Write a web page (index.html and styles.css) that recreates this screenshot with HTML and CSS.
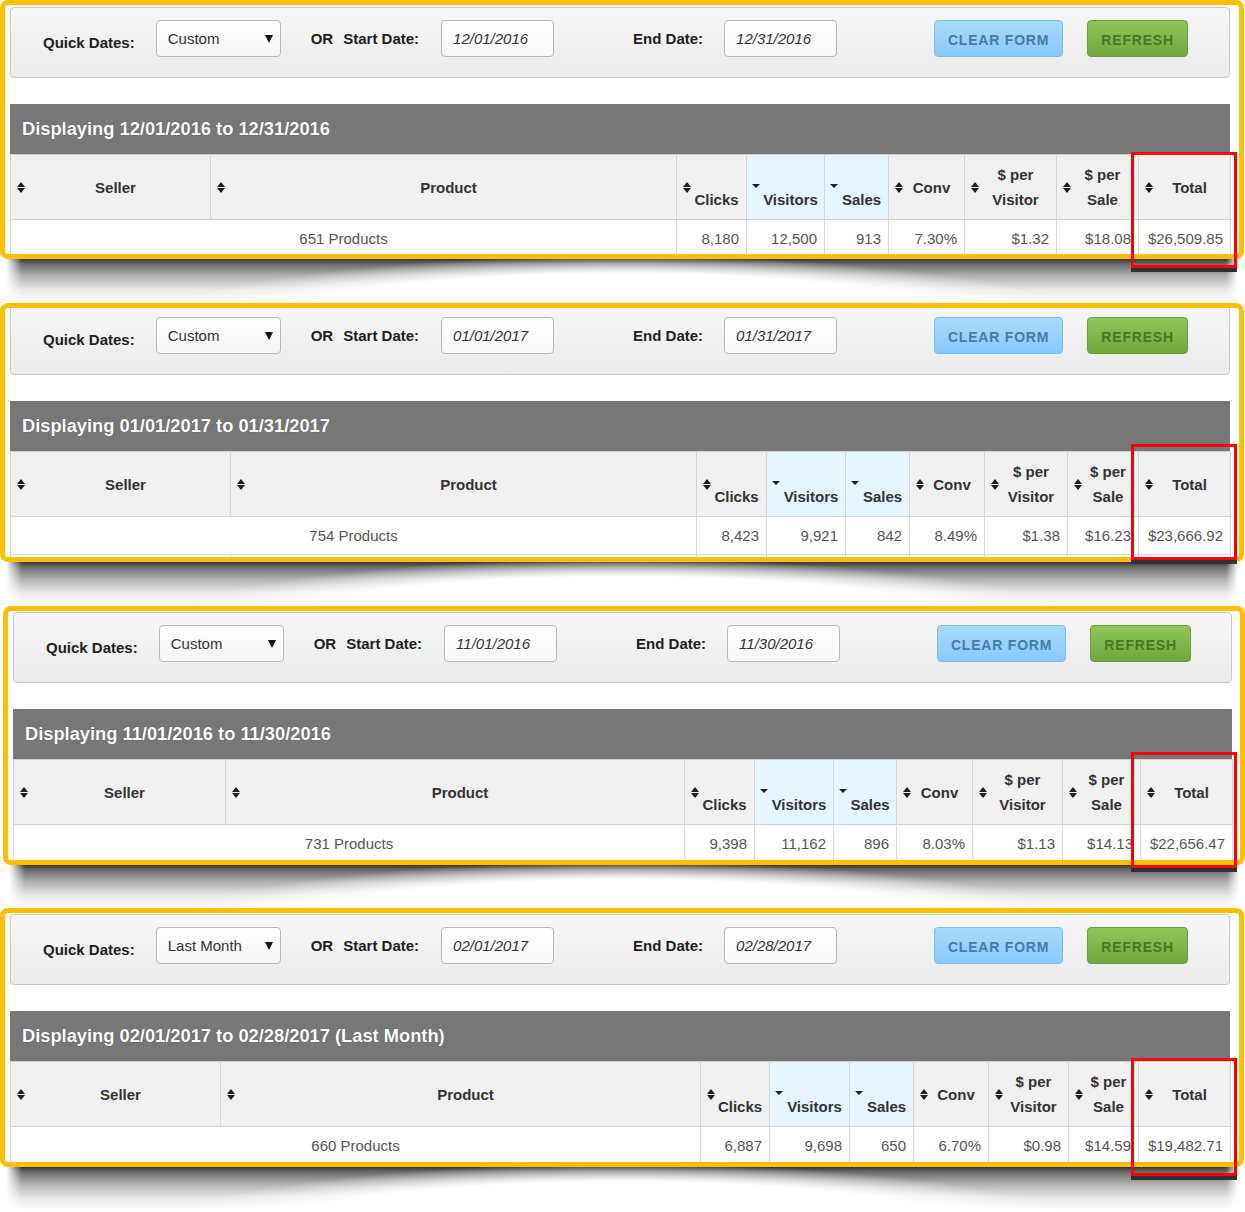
FILE: index.html
```html
<!DOCTYPE html>
<html lang="en">
<head>
<meta charset="utf-8">
<title>Date range reports</title>
<link rel="stylesheet" href="styles.css">
</head>
<body>
<div class="page">

  <section class="panel panel-1">
    <div class="frame">
      <form class="filters">
        <span class="lbl lbl-quick">Quick Dates:</span>
        <div class="select"><span>Custom</span><i class="caret"></i></div>
        <span class="lbl lbl-or"><span class="or">OR</span>Start Date:</span>
        <div class="date">12/01/2016</div>
        <span class="lbl lbl-end">End Date:</span>
        <div class="date">12/31/2016</div>
        <button type="button" class="btn btn-clear">CLEAR FORM</button>
        <button type="button" class="btn btn-refresh">REFRESH</button>
      </form>
      <h2 class="range">Displaying 12/01/2016 to 12/31/2016</h2>
      <table class="stats">
        <colgroup><col><col><col><col><col><col><col><col><col></colgroup>
        <thead>
          <tr>
            <th><i class="sort"></i>Seller</th>
            <th><i class="sort"></i>Product</th>
            <th class="low"><i class="sort"></i><span>Clicks</span></th>
            <th class="low active"><i class="sort-desc"></i><span>Visitors</span></th>
            <th class="low active"><i class="sort-desc"></i><span>Sales</span></th>
            <th><i class="sort"></i>Conv</th>
            <th><i class="sort"></i>$ per<br>Visitor</th>
            <th><i class="sort"></i>$ per<br>Sale</th>
            <th><i class="sort"></i>Total</th>
          </tr>
        </thead>
        <tbody>
          <tr>
            <td class="count" colspan="2">651 Products</td>
            <td>8,180</td><td>12,500</td><td>913</td><td>7.30%</td><td>$1.32</td><td>$18.08</td><td>$26,509.85</td>
          </tr>
          <tr class="blank"><td></td><td></td><td></td><td></td><td></td><td></td><td></td><td></td><td></td></tr>
        </tbody>
      </table>
    </div>
    <div class="highlight"></div>
  </section>

  <section class="panel panel-2">
    <div class="frame">
      <form class="filters">
        <span class="lbl lbl-quick">Quick Dates:</span>
        <div class="select"><span>Custom</span><i class="caret"></i></div>
        <span class="lbl lbl-or"><span class="or">OR</span>Start Date:</span>
        <div class="date">01/01/2017</div>
        <span class="lbl lbl-end">End Date:</span>
        <div class="date">01/31/2017</div>
        <button type="button" class="btn btn-clear">CLEAR FORM</button>
        <button type="button" class="btn btn-refresh">REFRESH</button>
      </form>
      <h2 class="range">Displaying 01/01/2017 to 01/31/2017</h2>
      <table class="stats">
        <colgroup><col><col><col><col><col><col><col><col><col></colgroup>
        <thead>
          <tr>
            <th><i class="sort"></i>Seller</th>
            <th><i class="sort"></i>Product</th>
            <th class="low"><i class="sort"></i><span>Clicks</span></th>
            <th class="low active"><i class="sort-desc"></i><span>Visitors</span></th>
            <th class="low active"><i class="sort-desc"></i><span>Sales</span></th>
            <th><i class="sort"></i>Conv</th>
            <th><i class="sort"></i>$ per<br>Visitor</th>
            <th><i class="sort"></i>$ per<br>Sale</th>
            <th><i class="sort"></i>Total</th>
          </tr>
        </thead>
        <tbody>
          <tr>
            <td class="count" colspan="2">754 Products</td>
            <td>8,423</td><td>9,921</td><td>842</td><td>8.49%</td><td>$1.38</td><td>$16.23</td><td>$23,666.92</td>
          </tr>
          <tr class="blank"><td></td><td></td><td></td><td></td><td></td><td></td><td></td><td></td><td></td></tr>
        </tbody>
      </table>
    </div>
    <div class="highlight"></div>
  </section>

  <section class="panel panel-3">
    <div class="frame">
      <form class="filters">
        <span class="lbl lbl-quick">Quick Dates:</span>
        <div class="select"><span>Custom</span><i class="caret"></i></div>
        <span class="lbl lbl-or"><span class="or">OR</span>Start Date:</span>
        <div class="date">11/01/2016</div>
        <span class="lbl lbl-end">End Date:</span>
        <div class="date">11/30/2016</div>
        <button type="button" class="btn btn-clear">CLEAR FORM</button>
        <button type="button" class="btn btn-refresh">REFRESH</button>
      </form>
      <h2 class="range">Displaying 11/01/2016 to 11/30/2016</h2>
      <table class="stats">
        <colgroup><col><col><col><col><col><col><col><col><col></colgroup>
        <thead>
          <tr>
            <th><i class="sort"></i>Seller</th>
            <th><i class="sort"></i>Product</th>
            <th class="low"><i class="sort"></i><span>Clicks</span></th>
            <th class="low active"><i class="sort-desc"></i><span>Visitors</span></th>
            <th class="low active"><i class="sort-desc"></i><span>Sales</span></th>
            <th><i class="sort"></i>Conv</th>
            <th><i class="sort"></i>$ per<br>Visitor</th>
            <th><i class="sort"></i>$ per<br>Sale</th>
            <th><i class="sort"></i>Total</th>
          </tr>
        </thead>
        <tbody>
          <tr>
            <td class="count" colspan="2">731 Products</td>
            <td>9,398</td><td>11,162</td><td>896</td><td>8.03%</td><td>$1.13</td><td>$14.13</td><td>$22,656.47</td>
          </tr>
          <tr class="blank"><td></td><td></td><td></td><td></td><td></td><td></td><td></td><td></td><td></td></tr>
        </tbody>
      </table>
    </div>
    <div class="highlight"></div>
  </section>

  <section class="panel panel-4">
    <div class="frame">
      <form class="filters">
        <span class="lbl lbl-quick">Quick Dates:</span>
        <div class="select"><span>Last Month</span><i class="caret"></i></div>
        <span class="lbl lbl-or"><span class="or">OR</span>Start Date:</span>
        <div class="date">02/01/2017</div>
        <span class="lbl lbl-end">End Date:</span>
        <div class="date">02/28/2017</div>
        <button type="button" class="btn btn-clear">CLEAR FORM</button>
        <button type="button" class="btn btn-refresh">REFRESH</button>
      </form>
      <h2 class="range">Displaying 02/01/2017 to 02/28/2017 (Last Month)</h2>
      <table class="stats">
        <colgroup><col><col><col><col><col><col><col><col><col></colgroup>
        <thead>
          <tr>
            <th><i class="sort"></i>Seller</th>
            <th><i class="sort"></i>Product</th>
            <th class="low"><i class="sort"></i><span>Clicks</span></th>
            <th class="low active"><i class="sort-desc"></i><span>Visitors</span></th>
            <th class="low active"><i class="sort-desc"></i><span>Sales</span></th>
            <th><i class="sort"></i>Conv</th>
            <th><i class="sort"></i>$ per<br>Visitor</th>
            <th><i class="sort"></i>$ per<br>Sale</th>
            <th><i class="sort"></i>Total</th>
          </tr>
        </thead>
        <tbody>
          <tr>
            <td class="count" colspan="2">660 Products</td>
            <td>6,887</td><td>9,698</td><td>650</td><td>6.70%</td><td>$0.98</td><td>$14.59</td><td>$19,482.71</td>
          </tr>
          <tr class="blank"><td></td><td></td><td></td><td></td><td></td><td></td><td></td><td></td><td></td></tr>
        </tbody>
      </table>
    </div>
    <div class="highlight"></div>
  </section>

</div>
</body>
</html>
```

FILE: styles.css
```css
html, body {
  margin: 0;
  background: #fff;
}

body {
  font-family: "Liberation Sans", Arial, sans-serif;
  color: #333;
}

.page {
  width: 1245px;
  padding-bottom: 45px;
}

/* ---------- panel frame ---------- */
.panel {
  position: relative;
  width: 1244px;
  height: 259px;
  margin-bottom: 44px;
}

.panel-3 {
  width: 1242px;
  margin-left: 3px;
  margin-bottom: 43px;
}

.panel-4 {
  margin-bottom: 0;
}

.frame {
  position: relative;
  z-index: 1;
  box-sizing: border-box;
  height: 100%;
  border: 5px solid #fdc000;
  border-radius: 8px;
  padding: 0 9px 0 5px;
  overflow: hidden;
  background: #fff;
}

.panel-3 .frame {
  padding-right: 8px;
}

/* curled drop shadow below each panel */
.panel::after {
  content: "";
  position: absolute;
  z-index: 0;
  left: 6px;
  right: 6px;
  top: 258px;
  height: 44px;
  background:
    radial-gradient(ellipse 470px 68px at 50% 66px, #fff 0%, #fff 74%, rgba(255, 255, 255, 0) 100%),
    linear-gradient(to bottom, rgba(25, 25, 25, 0.92) 0, rgba(45, 45, 45, 0.7) 6px, rgba(70, 70, 70, 0.42) 18px, rgba(100, 100, 100, 0.15) 32px, rgba(130, 130, 130, 0) 44px);
  -webkit-mask-image: linear-gradient(to right, transparent 0, #000 16px, #000 calc(100% - 12px), transparent 100%);
  mask-image: linear-gradient(to right, transparent 0, #000 16px, #000 calc(100% - 12px), transparent 100%);
}

/* red highlight around the Total column */
.highlight {
  position: absolute;
  z-index: 2;
  right: 7px;
  top: 152px;
  box-sizing: border-box;
  width: 106px;
  height: 116px;
  border: 3px solid #ff0000;
  box-shadow: 0 4px 0 #303030;
}

.panel-2 .highlight { top: 141px; }
.panel-3 .highlight { top: 146px; right: 8px; }
.panel-4 .highlight { top: 150px; height: 118px; }

/* ---------- filter bar ---------- */
.filters {
  box-sizing: border-box;
  height: 71px;
  margin: 2px 0 0;
  padding: 12px 0 0 32px;
  display: flex;
  align-items: flex-start;
  border: 1px solid #c8c8c8;
  border-radius: 4px;
  background: linear-gradient(to bottom, #f7f7f7 0%, #efefef 60%, #ebebeb 100%);
}

.panel-2 .filters { margin-top: -4px; }
.panel-3 .filters,
.panel-4 .filters { margin-top: 1px; }

.lbl {
  font-size: 15px;
  font-weight: bold;
  color: #1e1e1e;
  line-height: 37px;
  white-space: nowrap;
}

.lbl-quick {
  margin-top: 4px;
}

.lbl-or {
  margin-left: 30px;
}

.or {
  margin-right: 10px;
}

.lbl-end {
  margin-left: 79px;
}

.select {
  box-sizing: border-box;
  width: 125px;
  height: 37px;
  margin-left: 21px;
  padding: 0 7px 0 11px;
  display: flex;
  align-items: center;
  justify-content: space-between;
  border: 1px solid #b8b8b8;
  border-radius: 4px;
  background: linear-gradient(to bottom, #ffffff, #f5f5f5);
  font-size: 15px;
  color: #333;
}

.caret {
  width: 0;
  height: 0;
  border-left: 4px solid transparent;
  border-right: 4px solid transparent;
  border-top: 8px solid #151515;
}

.date {
  box-sizing: border-box;
  width: 113px;
  height: 37px;
  margin-left: 22px;
  padding-left: 11px;
  border: 1px solid #b8b8b8;
  border-radius: 4px;
  background: linear-gradient(to bottom, #ffffff, #f8f8f8);
  font-size: 15px;
  font-style: italic;
  line-height: 35px;
  color: #333;
}

.lbl-end + .date {
  margin-left: 21px;
}

.btn {
  box-sizing: border-box;
  height: 37px;
  padding: 3px 0 0;
  border-radius: 4px;
  font-family: "Liberation Sans", Arial, sans-serif;
  font-size: 14px;
  font-weight: bold;
  letter-spacing: 0.8px;
  text-align: center;
  cursor: pointer;
}

.btn-clear {
  width: 129px;
  margin-left: 97px;
  border: 1px solid #7dbbec;
  background: linear-gradient(to bottom, #a7dbfe, #88c9fc);
  color: #487aa4;
}

.btn-refresh {
  width: 101px;
  margin-left: 24px;
  border: 1px solid #699d39;
  background: linear-gradient(to bottom, #90c55c, #70a83d);
  color: #467820;
}

/* ---------- range title ---------- */
.range {
  margin: 26px 0 0;
  height: 50px;
  padding-left: 12px;
  background: #777777;
  color: #fff;
  font-size: 18.3px;
  font-weight: bold;
  line-height: 50px;
  text-shadow: 0 0 1px rgba(0, 0, 0, 0.45);
}

/* ---------- table ---------- */
.stats {
  width: 1220px;
  border-collapse: collapse;
  table-layout: fixed;
}

.panel-3 .stats {
  width: 1219px;
}

.stats th {
  position: relative;
  height: 64px;
  padding: 0 4px 0 14px;
  border: 1px solid #d4d4d4;
  border-top-color: #cfcfcf;
  background: #f0f0f0;
  font-size: 15px;
  font-weight: bold;
  color: #333;
  line-height: 25px;
  text-align: center;
  vertical-align: middle;
}

.stats th.active {
  background: #e6f4fe;
}

.stats th.low span {
  display: block;
  padding-top: 25px;
}

.sort {
  position: absolute;
  left: 6px;
  top: 50%;
  width: 8px;
  height: 11px;
  margin-top: -5px;
}

.sort::before,
.sort::after {
  content: "";
  position: absolute;
  left: 0;
  width: 0;
  height: 0;
  border-left: 4px solid transparent;
  border-right: 4px solid transparent;
}

.sort::before {
  top: 0;
  border-bottom: 5px solid #1e1e1e;
}

.sort::after {
  top: 6px;
  border-top: 5px solid #1e1e1e;
}

.sort-desc {
  position: absolute;
  left: 5px;
  top: 50%;
  width: 0;
  height: 0;
  margin-top: -3px;
  border-left: 4px solid transparent;
  border-right: 4px solid transparent;
  border-top: 4px solid #1e1e1e;
}

.stats td {
  height: 37px;
  padding: 0 7px;
  border: 1px solid #d9d9d9;
  background: #fff;
  font-size: 15px;
  color: #555;
  text-align: right;
  vertical-align: middle;
  white-space: nowrap;
}

.stats td.count {
  text-align: center;
}

/* column widths, per panel */
.panel-1 col:nth-child(1) { width: 200px; }
.panel-1 col:nth-child(2) { width: 466px; }
.panel-1 col:nth-child(3) { width: 70px; }
.panel-1 col:nth-child(4) { width: 78px; }
.panel-1 col:nth-child(5) { width: 64px; }
.panel-1 col:nth-child(6) { width: 76px; }
.panel-1 col:nth-child(7) { width: 92px; }
.panel-1 col:nth-child(8) { width: 82px; }
.panel-1 col:nth-child(9) { width: 92px; }

.panel-2 col:nth-child(1) { width: 220px; }
.panel-2 col:nth-child(2) { width: 466px; }
.panel-2 col:nth-child(3) { width: 70px; }
.panel-2 col:nth-child(4) { width: 79px; }
.panel-2 col:nth-child(5) { width: 64px; }
.panel-2 col:nth-child(6) { width: 75px; }
.panel-2 col:nth-child(7) { width: 83px; }
.panel-2 col:nth-child(8) { width: 71px; }
.panel-2 col:nth-child(9) { width: 92px; }

.panel-3 col:nth-child(1) { width: 212px; }
.panel-3 col:nth-child(2) { width: 459px; }
.panel-3 col:nth-child(3) { width: 70px; }
.panel-3 col:nth-child(4) { width: 79px; }
.panel-3 col:nth-child(5) { width: 63px; }
.panel-3 col:nth-child(6) { width: 76px; }
.panel-3 col:nth-child(7) { width: 90px; }
.panel-3 col:nth-child(8) { width: 78px; }
.panel-3 col:nth-child(9) { width: 92px; }

.panel-4 col:nth-child(1) { width: 210px; }
.panel-4 col:nth-child(2) { width: 480px; }
.panel-4 col:nth-child(3) { width: 69px; }
.panel-4 col:nth-child(4) { width: 80px; }
.panel-4 col:nth-child(5) { width: 64px; }
.panel-4 col:nth-child(6) { width: 75px; }
.panel-4 col:nth-child(7) { width: 80px; }
.panel-4 col:nth-child(8) { width: 70px; }
.panel-4 col:nth-child(9) { width: 92px; }
```
